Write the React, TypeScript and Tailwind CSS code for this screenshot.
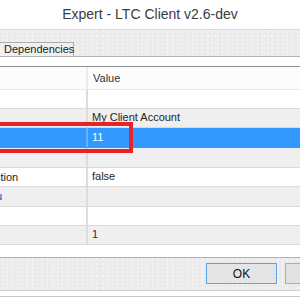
const texture =
  'bg-[#ebebeb] bg-[radial-gradient(#f9f9f9_0.6px,transparent_0.9px),radial-gradient(#f6f6f6_0.6px,transparent_0.9px)] bg-[length:5px_4px,7px_6px] bg-[position:0_0,2px_3px]';

type Row = {
  h: string;
  bg: string;
  name?: React.ReactNode;
  value?: React.ReactNode;
  selected?: boolean;
};

const rows: Row[] = [
  { h: 'h-[19px]', bg: 'bg-white' },
  { h: 'h-[19px]', bg: 'bg-[#efefef]', value: 'My Client Account' },
  { h: 'h-[20px]', bg: 'bg-[#3399ff]', value: '11', selected: true },
  { h: 'h-[20px]', bg: 'bg-[#efefef]' },
  { h: 'h-[19px]', bg: 'bg-white', name: <span className="-ml-[5px]">ction</span>, value: 'false' },
  { h: 'h-[20px]', bg: 'bg-[#efefef]', name: <span className="-ml-[4px] text-[#1a44c8]">u</span> },
  { h: 'h-[19px]', bg: 'bg-white' },
  { h: 'h-[19px]', bg: 'bg-[#efefef]', value: <span className="text-[#4a1942]">1</span> },
];

export default function App() {
  return (
    <div className="relative w-[300px] h-[300px] overflow-hidden bg-white font-['Liberation_Sans',Arial,sans-serif] text-[11px] text-[#1e1e1e]">
      {/* title bar */}
      <div className="h-[30px] bg-white border-b border-[#dadada] flex items-center justify-center">
        <span className="text-[14px] text-[#3c3c3c] pb-[1px]">Expert - LTC Client v2.6-dev</span>
      </div>

      {/* tab strip */}
      <div className={`h-[27px] flex items-end border-b border-[#b4b4b4] ${texture}`}>
        <div className="w-[74px] h-[14px] bg-[#f0f0f0] border-t border-r border-[#acacac] flex items-center pl-[4px] text-[11px] leading-none text-[#222]">
          Dependencies
        </div>
      </div>

      {/* tab body */}
      <div className="h-[9px] bg-white" />

      {/* grid */}
      <div className="border-t border-[#8c9096]">
        <div className="h-[23px] flex bg-[#fcfcfc] border-b border-[#e2eaf4]">
          <div className="w-[88px] border-r-2 border-[#e9eef5]" />
          <div className="flex-1 flex items-center pl-[5px] text-[#333]">Value</div>
        </div>
        {rows.map((r, i) => (
          <div key={i} className={`${r.h} flex ${r.bg} border-b ${r.selected ? 'border-[#3399ff]' : 'border-[#d9d9d9]'}`}>
            <div className={`w-[88px] flex items-center overflow-hidden whitespace-nowrap border-r-2 ${r.selected ? 'border-[#66b3ff]' : 'border-[#dcdcdc]'}`}>
              {r.name}
            </div>
            <div className={`flex-1 flex items-center pl-[4px] pb-[1px] ${r.selected ? 'text-white' : ''}`}>{r.value}</div>
          </div>
        ))}
      </div>

      <div className="h-[12px] bg-white" />

      {/* button bar */}
      <div className={`h-[34px] border-t border-[#b0b0b0] border-b border-b-[#d0d0d0] flex items-start pt-[5px] ${texture}`}>
        <div className="shrink-0 ml-[206px] w-[71px] h-[21px] bg-[#e5e5e5] border border-[#5aa2ec] flex items-center justify-center text-[12px] text-[#111]">
          OK
        </div>
        <div className="shrink-0 ml-[8px] w-[71px] h-[21px] bg-[#e1e1e1] border border-[#adadad] flex items-center justify-center text-[12px] text-[#111]">
          Cancel
        </div>
      </div>
      <div className="h-[6px] bg-white border-b border-[#c8c8c8]" />

      {/* annotation */}
      <div className="absolute left-[-10px] top-[122px] w-[143px] h-[31px] border-[4px] border-[#e8222b]" />
    </div>
  );
}
